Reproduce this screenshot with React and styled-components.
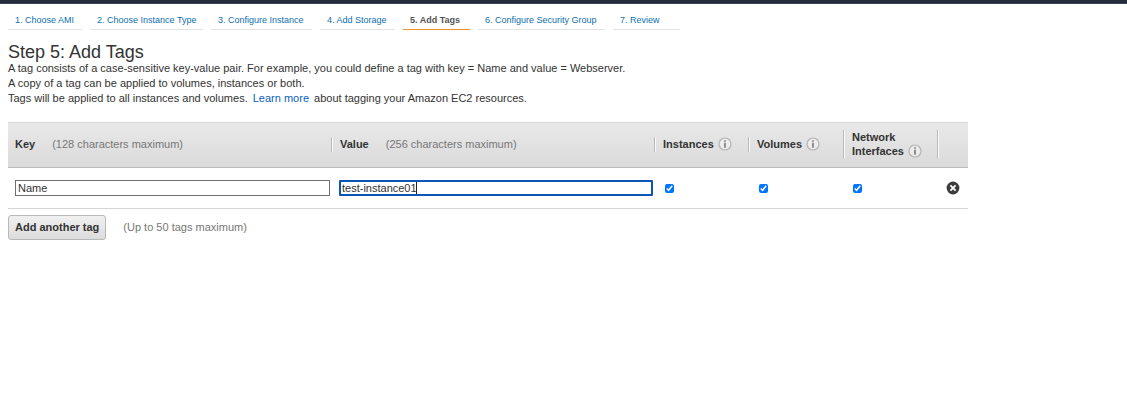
import React, { useState } from "react";
import styled, { createGlobalStyle } from "styled-components";

const GlobalStyle = createGlobalStyle`
  *, *::before, *::after { box-sizing: border-box; }
  body {
    margin: 0;
    background: #fff;
    color: #333;
    font-family: "Liberation Sans", Arial, Helvetica, sans-serif;
    font-size: 11px;
    line-height: 15px;
  }
`;

const TopBar = styled.div`
  height: 4px;
  background: #232f3e;
  border-bottom: 1px solid #3b4350;
`;

const Page = styled.main`
  padding: 0 8px;
`;

const Steps = styled.nav`
  display: flex;
  flex-wrap: wrap;
  gap: 8px;
  padding-top: 8px;
`;

const Step = styled.a`
  width: ${(p) => p.$width}px;
  height: 18px;
  padding-left: 7px;
  font-size: 9px;
  line-height: 16px;
  white-space: nowrap;
  text-decoration: none;
  color: ${(p) => (p.$active ? "#555" : "#0f6fb0")};
  font-weight: ${(p) => (p.$active ? "bold" : "normal")};
  border-bottom: 1px solid ${(p) => (p.$active ? "#f0932f" : "#e4e4e4")};
`;

const Title = styled.h1`
  margin: 13px 0 0;
  font-size: 18px;
  line-height: 18px;
  font-weight: normal;
`;

const Intro = styled.p`
  margin: 0;
`;

const TextLink = styled.a`
  margin: 0 2px;
  color: #0a63bd;
  text-decoration: none;
`;

const TagTable = styled.table`
  width: 100%;
  max-width: 960px;
  margin-top: 16px;
  border-collapse: separate;
  border-spacing: 0;
  table-layout: fixed;
`;

const HeadRow = styled.tr`
  height: 46px;
  background: linear-gradient(#e9e9e9, #dadada);
`;

const HeadCell = styled.th`
  padding: 0 0 2px;
  text-align: left;
  line-height: 14px;
  border-top: 1px solid #d6d6d6;
  border-bottom: 1px solid #bbb;
`;

const HeadContent = styled.div`
  display: flex;
  align-items: center;
  height: ${(p) => (p.$tall ? 29 : 15)}px;
  padding-left: ${(p) => (p.$first ? 7 : 8)}px;
  border-left: ${(p) => (p.$first ? "0" : "1px solid #bbb")};
  box-shadow: ${(p) => (p.$first ? "none" : "inset 1px 0 #f8f8f8")};
`;

const Hint = styled.span`
  margin-left: 17px;
  color: #777;
  font-weight: normal;
`;

const InfoButton = styled.button`
  display: inline-flex;
  flex: none;
  width: 14px;
  height: 14px;
  margin-left: 4px;
  padding: 0;
  border: 0;
  background: none;
  vertical-align: top;
`;

const BodyCell = styled.td`
  height: 41px;
  padding: 0 ${(p) => p.$right || 0}px 0 ${(p) => p.$left || 7}px;
  border-bottom: 1px solid #d6d6d6;
  vertical-align: middle;
`;

const FieldWrap = styled.div`
  position: relative;
  display: flex;
`;

const Field = styled.input`
  width: 100%;
  height: 16px;
  margin: 0;
  padding: 0 ${(p) => (p.$active ? 1 : 2)}px;
  border: ${(p) => (p.$active ? "2px solid #0b57b7" : "1px solid #707070")};
  border-radius: ${(p) => (p.$active ? 1 : 0)}px;
  outline: 0;
  background: #fff;
  color: #333;
  font: inherit;
  line-height: 12px;
`;

const Caret = styled.span`
  position: absolute;
  top: 2px;
  left: 77px;
  width: 1px;
  height: 12px;
  background: #222;
`;

const Check = styled.input`
  display: block;
  width: 9px;
  height: 9px;
  margin: 0;
  accent-color: #0075ff;
`;

const RemoveButton = styled.button`
  display: block;
  width: 14px;
  height: 14px;
  padding: 0;
  border: 0;
  background: none;
`;

const Footer = styled.div`
  display: flex;
  align-items: center;
  gap: 17px;
  margin-top: 6px;
  color: #777;
`;

const AddButton = styled.button`
  height: 25px;
  padding: 0 6px;
  border: 1px solid #b8b8b8;
  border-radius: 3px;
  background: linear-gradient(#f0f0f0, #dcdcdc);
  color: #333;
  font: inherit;
  font-weight: bold;
  white-space: nowrap;
`;

const steps = [
  ["1. Choose AMI", 74],
  ["2. Choose Instance Type", 113],
  ["3. Configure Instance", 101],
  ["4. Add Storage", 75],
  ["5. Add Tags", 67],
  ["6. Configure Security Group", 127],
  ["7. Review", 67],
];

function Info({ label }) {
  return (
    <InfoButton type="button" aria-label={`About ${label}`}>
      <svg width="14" height="14" viewBox="0 0 14 14">
        <circle cx="7" cy="7" r="6" fill="#ececec" stroke="#b4b4b4" strokeWidth="1.2" />
        <path d="M6.2 3.2h1.6v1.5H6.2zM6.2 5.8h1.6v5H6.2z" fill="#777" />
      </svg>
    </InfoButton>
  );
}

export default function App() {
  const [name, setName] = useState("Name");
  const [value, setValue] = useState("test-instance01");

  return (
    <>
      <GlobalStyle />
      <TopBar />
      <Page>
        <Steps aria-label="Launch steps">
          {steps.map(([label, width], i) => (
            <Step key={label} href="#" $width={width} $active={i === 4}>
              {label}
            </Step>
          ))}
        </Steps>
        <Title>Step 5: Add Tags</Title>
        <Intro>
          A tag consists of a case-sensitive key-value pair. For example, you could define a tag
          with key = Name and value = Webserver.
        </Intro>
        <Intro>A copy of a tag can be applied to volumes, instances or both.</Intro>
        <Intro>
          Tags will be applied to all instances and volumes. <TextLink href="#">Learn more</TextLink>{" "}
          about tagging your Amazon EC2 resources.
        </Intro>
        <TagTable>
          <colgroup>
            <col />
            <col />
            <col width="94" />
            <col width="95" />
            <col width="94" />
            <col width="31" />
          </colgroup>
          <thead>
            <HeadRow>
              <HeadCell>
                <HeadContent $first>
                  Key<Hint>(128 characters maximum)</Hint>
                </HeadContent>
              </HeadCell>
              <HeadCell>
                <HeadContent>
                  Value<Hint>(256 characters maximum)</Hint>
                </HeadContent>
              </HeadCell>
              <HeadCell>
                <HeadContent>
                  Instances
                  <Info label="instances" />
                </HeadContent>
              </HeadCell>
              <HeadCell>
                <HeadContent>
                  Volumes
                  <Info label="volumes" />
                </HeadContent>
              </HeadCell>
              <HeadCell>
                <HeadContent $tall>
                  <span>
                    Network
                    <br />
                    Interfaces
                    <Info label="network interfaces" />
                  </span>
                </HeadContent>
              </HeadCell>
              <HeadCell>
                <HeadContent $tall />
              </HeadCell>
            </HeadRow>
          </thead>
          <tbody>
            <tr>
              <BodyCell $right={1}>
                <Field aria-label="Key" value={name} onChange={(e) => setName(e.target.value)} />
              </BodyCell>
              <BodyCell $left={8} $right={1}>
                <FieldWrap>
                  <Field
                    $active
                    aria-label="Value"
                    value={value}
                    onChange={(e) => setValue(e.target.value)}
                  />
                  <Caret />
                </FieldWrap>
              </BodyCell>
              <BodyCell $left={11}>
                <Check type="checkbox" aria-label="Instances" defaultChecked />
              </BodyCell>
              <BodyCell $left={11}>
                <Check type="checkbox" aria-label="Volumes" defaultChecked />
              </BodyCell>
              <BodyCell $left={10}>
                <Check type="checkbox" aria-label="Network Interfaces" defaultChecked />
              </BodyCell>
              <BodyCell $left={9}>
                <RemoveButton type="button" aria-label="Remove tag">
                  <svg width="14" height="14" viewBox="0 0 14 14">
                    <circle cx="7" cy="7" r="6.4" fill="#3c3c3c" />
                    <path d="M4.4 4.4l5.2 5.2M9.6 4.4L4.4 9.6" stroke="#fff" strokeWidth="1.8" />
                  </svg>
                </RemoveButton>
              </BodyCell>
            </tr>
          </tbody>
        </TagTable>
        <Footer>
          <AddButton type="button">Add another tag</AddButton>
          <span>(Up to 50 tags maximum)</span>
        </Footer>
      </Page>
    </>
  );
}
